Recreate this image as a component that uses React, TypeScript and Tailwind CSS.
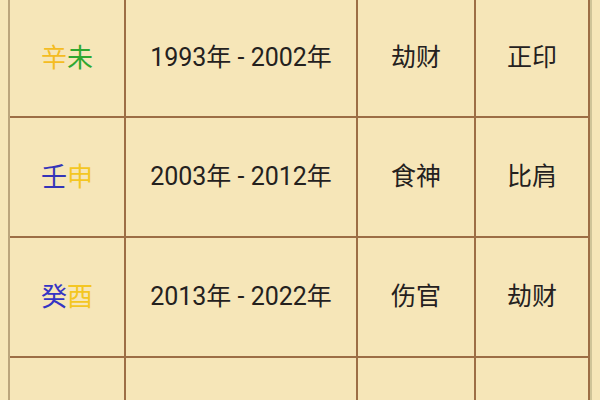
import React from "react";

type Row = { gz: [string, string][]; years: string; a: string; b: string };

const rows: Row[] = [
  { gz: [["辛", "text-[#f4bc22]"], ["未", "text-[#2fa82f]"]], years: "1993年 - 2002年", a: "劫财", b: "正印" },
  { gz: [["壬", "text-[#3434b8]"], ["申", "text-[#f4c622]"]], years: "2003年 - 2012年", a: "食神", b: "比肩" },
  { gz: [["癸", "text-[#3434c4]"], ["酉", "text-[#f4c622]"]], years: "2013年 - 2022年", a: "伤官", b: "劫财" },
  { gz: [], years: "", a: "", b: "" },
];

export default function App() {
  return (
    <div
      className="w-[600px] h-[400px] overflow-hidden bg-[#f6e6b8] pl-[8px] text-[#24211e]"
      style={{ fontFamily: '"Roboto", "Noto Sans CJK SC", sans-serif' }}
    >
      <div className="w-[584px] border-r-2 border-[#cfc498]">
        {rows.map((r, i) => (
          <div
            key={i}
            className={`flex border-l-2 border-[#bba57c] ${i === 0 ? "h-[118px]" : "h-[120px]"}`}
          >
            <div className="w-[116px] border-r-2 border-b-2 border-[#9d6e45] flex items-center justify-center text-[26px]">
              {r.gz.map(([c, cls], j) => (
                <span key={j} className={cls}>{c}</span>
              ))}
            </div>
            <div className="w-[232px] border-r-2 border-b-2 border-[#9d6e45] flex items-center justify-center text-[25px]">
              {r.years}
            </div>
            <div className="w-[118px] border-r-2 border-b-2 border-[#9d6e45] flex items-center justify-center text-[25px]">
              {r.a}
            </div>
            <div className="w-[114px] border-r-2 border-b-2 border-[#9d6e45] flex items-center justify-center text-[25px]">
              {r.b}
            </div>
          </div>
        ))}
      </div>
    </div>
  );
}
